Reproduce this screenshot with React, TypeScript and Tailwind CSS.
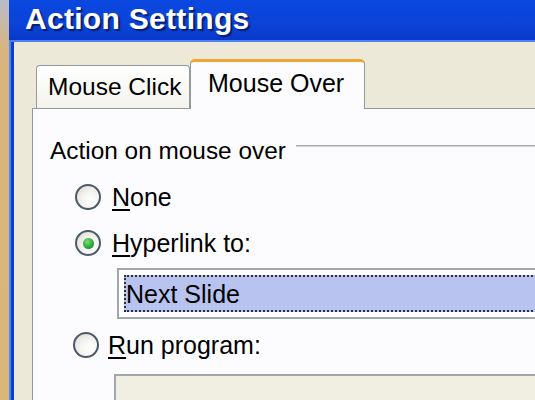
import React from "react";

const font = { fontFamily: '"Liberation Sans", Arial, sans-serif' };

function Radio({ checked }: { checked?: boolean }) {
  return (
    <div className="relative w-[26px] h-[26px] shrink-0 rounded-full border-2 border-[#4a5a6a] bg-[radial-gradient(circle_at_65%_65%,#ffffff_0%,#f4f4ef_45%,#d6d5cc_100%)] flex items-center justify-center">
      {checked && (
        <div className="w-[11px] h-[11px] rounded-full bg-[radial-gradient(circle_at_40%_35%,#7fe07a_0%,#2ea83a_55%,#1d7d27_100%)]" />
      )}
    </div>
  );
}

export default function App() {
  return (
    <div className="w-[535px] h-[400px] overflow-hidden">
      <div
        className="w-[600px] h-[400px] flex bg-[#ece9d8] text-black"
        style={font}
      >
        {/* desktop strip */}
        <div className="w-[9px] shrink-0 bg-[linear-gradient(to_bottom,#b9bcc8_0%,#d6b67e_12%,#d9b67a_100%)]" />
        {/* window */}
        <div className="flex-1 flex flex-col">
          {/* title bar */}
          <div className="h-[40px] shrink-0 bg-[linear-gradient(to_bottom,#0a48e0_0%,#0b42d8_60%,#0a39c8_100%)] flex items-start pl-[16px] pt-[2px]">
            <span className="text-white font-bold text-[30px] leading-[34px] [text-shadow:2px_2px_1px_#07206e] tracking-[0.3px]">
              Action Settings
            </span>
          </div>
          <div className="h-[2px] shrink-0 bg-[#4b84f2]" />
          {/* body */}
          <div className="flex-1 min-h-0 flex">
            <div className="w-[2px] shrink-0 bg-[#4f86f2]" />
            <div className="w-[3px] shrink-0 bg-[#0a3ed2]" />
            <div className="flex-1 bg-[#ece9d8] pl-[18px] flex flex-col">
              {/* tabs */}
              <div className="flex items-end pt-[17px] pl-[4px]">
                <div className="w-[154px] h-[43px] border border-b-0 border-[#919b9c] rounded-t-[4px] bg-[linear-gradient(to_bottom,#ffffff_0%,#f3f2ec_100%)] pl-[11px] pt-[6px]">
                  <span className="text-[24.5px] leading-[30px] whitespace-nowrap">Mouse Click</span>
                </div>
                <div className="relative z-10 -mb-px w-[175px] h-[50px] bg-[#fcfcfe] border-x border-[#919b9c] rounded-t-[5px] border-t-[3px] border-t-[#f2a531] pl-[17px] pt-[6px]">
                  <span className="text-[25px] leading-[30px] whitespace-nowrap">Mouse Over</span>
                </div>
              </div>
              {/* panel */}
              <div className="flex-1 bg-[#fcfcfe] border-t border-l border-[#919b9c] pl-[17px]">
                <div className="flex items-start pt-[27px]">
                  <span className="text-[24.4px] leading-[30px] whitespace-nowrap">Action on mouse over</span>
                  <div className="ml-[10px] mt-[9px] flex-1 flex flex-col">
                    <div className="h-px bg-[#a9aca8]" />
                    <div className="h-px bg-[#d4d4d0]" />
                  </div>
                </div>
                {/* None */}
                <div className="flex items-center h-[30px] mt-[16px] pl-[25px]">
                  <Radio />
                  <span className="ml-[11px] text-[25px] leading-[30px] whitespace-nowrap">
                    <span className="underline underline-offset-[3px] decoration-[1.5px]">N</span>one
                  </span>
                </div>
                {/* Hyperlink */}
                <div className="flex items-center h-[30px] mt-[16px] pl-[25px]">
                  <Radio checked />
                  <span className="ml-[11px] text-[25px] leading-[30px] whitespace-nowrap">
                    <span className="underline underline-offset-[3px] decoration-[1.5px]">H</span>yperlink to:
                  </span>
                </div>
                {/* dropdown */}
                <div className="ml-[67px] mt-[10px] h-[51px] border-y-2 border-l-2 border-[#a2a7ab] bg-white py-[5px] pl-[5px]">
                  <div className="h-full border-y-2 border-l-2 border-dotted border-[#2c3038] bg-[#b8c3f0] flex items-center">
                    <span className="text-[25px] leading-[30px] whitespace-nowrap">Next Slide</span>
                  </div>
                </div>
                {/* Run program */}
                <div className="flex items-center h-[30px] mt-[11px] pl-[23px]">
                  <Radio />
                  <span className="ml-[9px] text-[25px] leading-[30px] whitespace-nowrap">
                    <span className="underline underline-offset-[3px] decoration-[1.5px]">R</span>un program:
                  </span>
                </div>
                {/* text box */}
                <div className="ml-[64px] mt-[14px] h-[60px] border-y-2 border-l-2 border-[#a2a7ab] bg-[#f1eee2]" />
              </div>
            </div>
          </div>
        </div>
      </div>
    </div>
  );
}
